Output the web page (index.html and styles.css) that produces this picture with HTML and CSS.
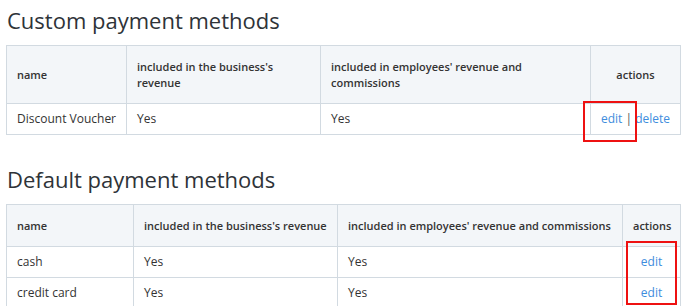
FILE: index.html
```html
<!DOCTYPE html>
<html lang="en">
<head>
<meta charset="utf-8">
<title>Payment methods</title>
<link rel="stylesheet" href="styles.css">
</head>
<body>
<div class="page">
  <h2 class="section-title">Custom payment methods</h2>
  <table class="methods methods-custom">
    <thead>
      <tr>
        <th class="col-name">name</th>
        <th class="col-biz">included in the business's revenue</th>
        <th class="col-emp">included in employees' revenue and commissions</th>
        <th class="col-actions">actions</th>
      </tr>
    </thead>
    <tbody>
      <tr>
        <td>Discount Voucher</td>
        <td>Yes</td>
        <td>Yes</td>
        <td class="actions"><a href="#">edit</a> <span class="sep">|</span> <a href="#">delete</a></td>
      </tr>
    </tbody>
  </table>

  <h2 class="section-title section-title--spaced">Default payment methods</h2>
  <table class="methods methods-default">
    <thead>
      <tr>
        <th class="col-name">name</th>
        <th class="col-biz">included in the business's revenue</th>
        <th class="col-emp">included in employees' revenue and commissions</th>
        <th class="col-actions">actions</th>
      </tr>
    </thead>
    <tbody>
      <tr>
        <td>cash</td>
        <td>Yes</td>
        <td>Yes</td>
        <td class="actions"><a href="#">edit</a></td>
      </tr>
      <tr>
        <td>credit card</td>
        <td>Yes</td>
        <td>Yes</td>
        <td class="actions"><a href="#">edit</a></td>
      </tr>
    </tbody>
  </table>

  <span class="highlight highlight-custom"></span>
  <span class="highlight highlight-default"></span>
</div>
</body>
</html>
```

FILE: styles.css
```css
html, body {
  margin: 0;
  padding: 0;
  background: #ffffff;
  overflow: hidden;
}

body {
  font-family: "Open Sans", "Noto Sans", sans-serif;
  color: #333333;
}

.page {
  position: relative;
  padding: 5px 6px 0 6px;
}

.section-title {
  margin: 0 0 10px 1px;
  font-size: 22px;
  line-height: 30px;
  font-weight: 400;
  color: #2e3338;
}

.section-title--spaced {
  margin-top: 29px;
}

.methods {
  width: 675px;
  border-collapse: collapse;
  table-layout: fixed;
}

.methods th,
.methods td {
  border: 1px solid #d2dae1;
  padding: 7px 10px;
  text-align: left;
  vertical-align: middle;
}

.methods th {
  background: #f3f6f9;
  font-size: 11px;
  line-height: 16px;
  font-weight: 600;
  padding-top: 13px;
  padding-bottom: 12px;
  color: #333333;
}

.methods td {
  font-size: 12px;
  line-height: 16px;
  white-space: nowrap;
  overflow: visible;
}

.methods .col-actions,
.methods .actions {
  text-align: center;
}

.methods-custom .col-name { width: 99px; }
.methods-custom .col-biz { width: 173px; }
.methods-custom .col-emp { width: 249px; }

.methods-default .col-name { width: 106px; }
.methods-default .col-biz { width: 183px; }
.methods-default .col-emp { width: 264px; }

.methods-custom .actions {
  padding-left: 8px;
  padding-right: 8px;
}

.actions a {
  color: #3e8ddd;
  text-decoration: none;
}

.actions .sep {
  color: #555555;
}

/* red outline marks drawn over the action cells */
.highlight {
  position: absolute;
  border: 2px solid #ee1111;
  box-sizing: border-box;
}

.highlight-custom {
  left: 583px;
  top: 101px;
  width: 54px;
  height: 41px;
}

.highlight-default {
  left: 626px;
  top: 241px;
  width: 51px;
  height: 64px;
}
```
